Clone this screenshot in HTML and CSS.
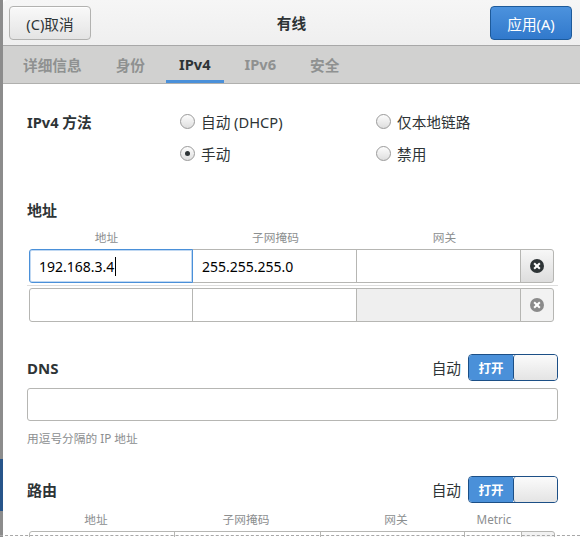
FILE: index.html
```html
<!DOCTYPE html>
<html lang="zh-CN">
<head>
<meta charset="utf-8">
<title>有线</title>
<link rel="stylesheet" href="styles.css">
</head>
<body>
<div class="screen">
  <div class="edge"></div>
  <div class="window">
    <header class="titlebar">
      <div class="tb-left"><button class="btn">(C)取消</button></div>
      <div class="title">有线</div>
      <div class="tb-right"><button class="btn btn-primary">应用(A)</button></div>
    </header>
    <nav class="tabs">
      <div class="tab">详细信息</div>
      <div class="tab">身份</div>
      <div class="tab active">IPv4</div>
      <div class="tab">IPv6</div>
      <div class="tab">安全</div>
    </nav>
    <main class="content">
      <div class="method">
        <div class="strong-label">IPv4 方法</div>
        <div class="radio"><span class="radio-dot"></span><span>自动 (DHCP)</span></div>
        <div class="radio"><span class="radio-dot"></span><span>仅本地链路</span></div>
        <div></div>
        <div class="radio"><span class="radio-dot checked"></span><span>手动</span></div>
        <div class="radio"><span class="radio-dot"></span><span>禁用</span></div>
      </div>

      <div class="section-title addr-title">地址</div>
      <div class="col-heads addr-heads"><span>地址</span><span>子网掩码</span><span>网关</span></div>
      <div class="addr-row">
        <div class="cell focus"><span class="value">192.168.3.4</span><span class="caret"></span></div>
        <div class="cell"><span class="value">255.255.255.0</span></div>
        <div class="cell"></div>
        <div class="cell remove"><span class="x-icon"></span></div>
      </div>
      <div class="row-sep"></div>
      <div class="addr-row second">
        <div class="cell"></div>
        <div class="cell"></div>
        <div class="cell insensitive"></div>
        <div class="cell remove flat"><span class="x-icon dim"></span></div>
      </div>

      <div class="section-head dns-head">
        <div class="section-title">DNS</div>
        <div class="auto"><span>自动</span><div class="switch"><span class="on">打开</span><span class="knob"></span></div></div>
      </div>
      <div class="entry"></div>
      <div class="hint">用逗号分隔的 IP 地址</div>

      <div class="section-head route-head">
        <div class="section-title">路由</div>
        <div class="auto"><span>自动</span><div class="switch"><span class="on">打开</span><span class="knob"></span></div></div>
      </div>
      <div class="col-heads route-heads"><span>地址</span><span>子网掩码</span><span>网关</span><span>Metric</span></div>
      <div class="route-row">
        <div class="cell"></div>
        <div class="cell"></div>
        <div class="cell"></div>
        <div class="cell"></div>
        <div class="cell remove flat"></div>
      </div>
    </main>
  </div>
  <div class="undershoot"></div>
</div>
</body>
</html>
```

FILE: styles.css
```css
* { box-sizing: border-box; }
html, body { margin: 0; padding: 0; background: #ffffff; }
body {
  font-family: "Noto Sans", "Noto Sans CJK SC", sans-serif;
  font-size: 14.67px;
  color: #2e3436;
}
.screen {
  position: relative;
  width: 580px;
  height: 537px;
  overflow: hidden;
  display: flex;
}
.edge {
  width: 3px;
  flex: none;
  background: linear-gradient(to bottom, #8c8c8c 0, #8c8c8c 459px, #27558a 459px, #27558a 511px, #8c8c8c 511px);
}
.window {
  flex: 1;
  display: flex;
  flex-direction: column;
  background: #ffffff;
}
.titlebar {
  height: 46px;
  flex: none;
  display: grid;
  grid-template-columns: 1fr auto 1fr;
  align-items: center;
  padding: 0 9px 0 6px;
  background: linear-gradient(to bottom, #f6f6f6, #efefef);
  border-bottom: 1px solid #a8a8a8;
  border-top-left-radius: 5px;
}
.tb-right { display: flex; justify-content: flex-end; }
.title { font-weight: bold; font-size: 14.67px; color: #2e3436; padding-left: 2px; margin-top: -1px; }
.btn {
  font-family: inherit;
  font-size: 14.67px;
  height: 34px;
  padding: 0 14px;
  margin-top: 1px;
  border: 1px solid #b2b2b0;
  border-radius: 4px;
  background: linear-gradient(to bottom, #f9f9f9, #e4e4e4);
  color: #2e3436;
  box-shadow: 0 1px 0 rgba(255,255,255,0.8) inset;
}
.btn:first-child { width: 82px; }
.btn-primary {
  width: 79px;
  padding: 0;
  color: #ffffff;
  border-color: #1d5a9a;
  background: linear-gradient(to bottom, #4c92dd, #3179cc);
  box-shadow: none;
}
.tabs {
  height: 38px;
  flex: none;
  display: flex;
  gap: 8px;
  padding-left: 7px;
  background: #d1d1d0;
  border-bottom: 1px solid #b0b0ae;
}
.tab {
  padding: 0 13px;
  display: flex;
  align-items: center;
  font-weight: bold;
  color: #8f9191;
  border-bottom: 3px solid transparent;
  padding-top: 2px;
}
.tab.active { color: #2e3436; border-bottom-color: #4a90d9; }
.content {
  padding: 0 23px 0 24px;
}
.method {
  margin-top: 25px;
  display: grid;
  grid-template-columns: 153px 196px 1fr;
  grid-auto-rows: 24px;
  row-gap: 8px;
  align-items: center;
}
.strong-label { font-weight: bold; }
.radio { display: flex; align-items: center; gap: 6px; }
.radio-dot {
  width: 15px;
  height: 15px;
  border-radius: 50%;
  border: 1px solid #9a9a9a;
  background: linear-gradient(to bottom, #fdfdfd, #dedede);
  display: flex;
  align-items: center;
  justify-content: center;
  flex: none;
  margin-top: 1px;
}
.radio-dot.checked::after {
  content: "";
  width: 5px;
  height: 5px;
  border-radius: 50%;
  background: #2e3436;
}
.section-title { font-weight: bold; font-size: 15px; line-height: 20px; }
.addr-title { margin-top: 35px; }
.col-heads {
  display: grid;
  font-size: 11.7px;
  line-height: 16px;
  color: #8b8e8f;
  text-align: center;
}
.addr-heads {
  margin-top: 9px;
  margin-left: -5px;
  grid-template-columns: 169px 169px 169px;
}
.addr-row {
  margin: 4px 3px 0 2px;
  display: grid;
  grid-template-columns: 164px 164px 164px 33px;
  height: 34px;
}
.addr-row.second { margin-top: 2px; }
.cell {
  position: relative;
  border: 1px solid #b6b6b3;
  margin-left: -1px;
  background: #ffffff;
  display: flex;
  align-items: center;
  padding-left: 9px;
  font-size: 14px;
  color: #000000;
}
.cell:first-child { margin-left: 0; border-radius: 3px 0 0 3px; }
.cell:last-child { border-radius: 0 3px 3px 0; }
.cell.focus {
  z-index: 1;
  border-color: #4a90d9;
  box-shadow: inset 0 0 0 1px rgba(74,144,217,0.35);
}
.caret {
  display: inline-block;
  width: 1px;
  height: 19px;
  background: #000000;
  margin-left: 1px;
}
.cell.insensitive { background: #efefef; }
.cell.remove {
  justify-content: center;
  padding-left: 0;
  background: linear-gradient(to bottom, #f7f7f7, #dddddd);
}
.cell.remove.flat { background: #f2f2f2; }
.x-icon {
  width: 14px;
  height: 14px;
  border-radius: 50%;
  background: #2e3436;
  position: relative;
  display: block;
}
.x-icon::before, .x-icon::after {
  content: "";
  position: absolute;
  left: 3px;
  top: 6px;
  width: 8px;
  height: 2px;
  background: #ffffff;
  transform: rotate(45deg);
}
.x-icon::after { transform: rotate(-45deg); }
.x-icon.dim { background: #8b8b8b; }
.row-sep {
  height: 1px;
  margin-top: 2px;
  background: #dedede;
}
.section-head {
  display: flex;
  justify-content: space-between;
  align-items: center;
  height: 27px;
}
.dns-head { margin-top: 32px; }
.route-head { margin-top: 30px; }
.auto { display: flex; align-items: center; gap: 7px; }
.switch {
  width: 90px;
  height: 27px;
  border: 1px solid #1c4f86;
  border-radius: 4px;
  display: flex;
  overflow: hidden;
}
.switch .on {
  width: 44px;
  background: #4a90d9;
  color: #ffffff;
  font-weight: bold;
  font-size: 12.5px;
  display: flex;
  align-items: center;
  justify-content: center;
}
.switch .knob {
  flex: 1;
  border-left: 1px solid #1c4f86;
  border-radius: 3px;
  background: linear-gradient(to bottom, #fbfbfb, #e4e4e4);
}
.entry {
  margin-top: 7px;
  height: 33px;
  border: 1px solid #b6b6b3;
  border-radius: 3px;
}
.hint {
  margin-top: 9px;
  font-size: 11.7px;
  line-height: 16px;
  color: #8b8e8f;
}
.route-heads {
  margin-top: 8px;
  margin-left: -6px;
  grid-template-columns: 150px 150px 150px 46px;
}
.route-row {
  margin: 4px 3px 0 2px;
  display: grid;
  grid-template-columns: 146px 146px 144px 57px 33px;
  height: 34px;
}
.undershoot {
  position: absolute;
  left: 0;
  right: 0;
  bottom: 0;
  height: 2px;
  border-top: 1px dashed #a8a8a8;
}
```
